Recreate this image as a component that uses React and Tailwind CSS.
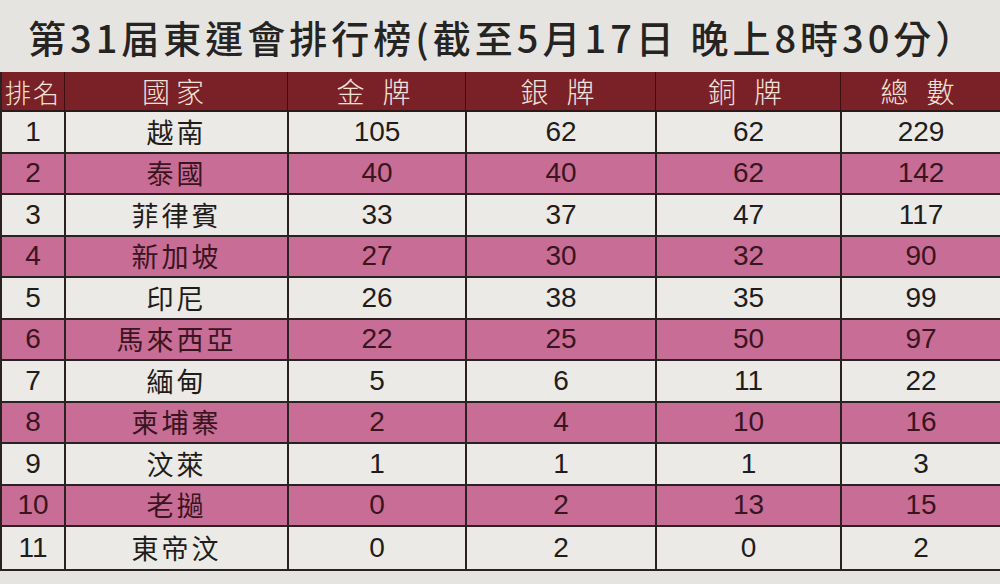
import React from "react";

const rows = [
  ["1", "越南", "105", "62", "62", "229"],
  ["2", "泰國", "40", "40", "62", "142"],
  ["3", "菲律賓", "33", "37", "47", "117"],
  ["4", "新加坡", "27", "30", "32", "90"],
  ["5", "印尼", "26", "38", "35", "99"],
  ["6", "馬來西亞", "22", "25", "50", "97"],
  ["7", "緬甸", "5", "6", "11", "22"],
  ["8", "柬埔寨", "2", "4", "10", "16"],
  ["9", "汶萊", "1", "1", "1", "3"],
  ["10", "老撾", "0", "2", "13", "15"],
  ["11", "東帝汶", "0", "2", "0", "2"],
];

const headers = ["排名", "國家", "金 牌", "銀 牌", "銅 牌", "總 數"];

function App() {
  return (
    <div className="w-[1000px] h-[584px] bg-[#e6e4e0] overflow-hidden flex flex-col">
      {/* Title */}
      <div className="h-[72px] flex items-center pl-[28px] text-[38px] font-medium text-[#262422] tracking-[4px] whitespace-nowrap font-['Noto_Sans_CJK_TC','Noto_Sans',sans-serif]">
        第31届東運會排行榜(截至5月17日 晚上8時30分）
      </div>

      {/* Table */}
      <div className="grid grid-cols-[62px_223px_178px_190px_185px_1fr] border-l-2 border-b-2 border-[#2a2220]">
        {headers.map((h, i) => (
          <div
            key={h}
            className={`h-[40px] bg-[#7a2128] flex items-center justify-center text-[#f2e3da] whitespace-nowrap font-light font-['Noto_Sans_CJK_TC','Noto_Sans',sans-serif] border-b-2 border-[#2a1a1a] ${
              i === 0
                ? "text-[26px] tracking-[2px]"
                : "text-[28px] tracking-[6px] border-l border-l-[#3b0f12]"
            }`}
          >
            {h}
          </div>
        ))}
        {rows.map((r, ri) => {
          const pink = ri % 2 === 1;
          return r.map((c, ci) => (
            <div
              key={ri + "-" + ci}
              className={`h-[41.5px] flex items-center justify-center ${
                pink ? "bg-[#c86d96] text-[#3a1520]" : "bg-[#ebeae6] text-[#1f1d1c]"
              } ${ci > 0 ? "border-l-2 border-[#2a2220]" : ""} ${
                ri < rows.length - 1 ? "border-b-2 border-b-[#2a2220]" : ""
              } ${
                ci === 1
                  ? "text-[27px] tracking-[3px] font-['Noto_Sans_CJK_TC','Noto_Sans',sans-serif]"
                  : "text-[28px] font-['Liberation_Sans',Arial,sans-serif]"
              }`}
            >
              {c}
            </div>
          ));
        })}
      </div>
    </div>
  );
}

export default App;
